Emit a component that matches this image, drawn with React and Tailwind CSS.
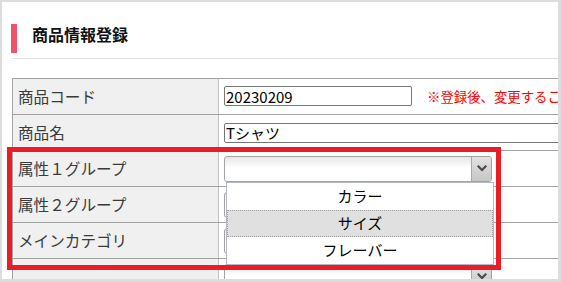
const rows = [
  { label: "商品コード", kind: "code" },
  { label: "商品名", kind: "name" },
  { label: "属性１グループ", kind: "open" },
  { label: "属性２グループ", kind: "select" },
  { label: "メインカテゴリ", kind: "select" },
  { label: "", kind: "select" },
];

const options = ["カラー", "サイズ", "フレーバー"];

function Chevron() {
  return (
    <svg width="10" height="7" viewBox="0 0 10 7" fill="none">
      <path d="M1.5 1.5 L5 5 L8.5 1.5" stroke="#4a4a4a" strokeWidth="2.2" strokeLinecap="square" />
    </svg>
  );
}

function SelectBox({ children }) {
  return (
    <div className="relative w-[268px] h-[26px] flex rounded-[3px] border border-[#a4a4a4] bg-gradient-to-b from-[#e6e6e6] to-white to-45%">
      <div className="flex-1" />
      <div className="w-[20px] h-full flex items-center justify-center border-l border-[#a8a8a8] rounded-r-[2px] bg-gradient-to-b from-[#e2e2e2] to-[#c6c6c6]">
        <Chevron />
      </div>
      {children}
    </div>
  );
}

function DropList() {
  return (
    <div className="absolute left-[1px] top-[25px] w-[268px] z-10 border border-[#b4b7c6] bg-white font-['Noto_Sans_CJK_JP',sans-serif] text-[15px] text-black">
      {options.map((opt, i) => (
        <div
          key={opt}
          className={
            i === 1
              ? "h-[27px] flex items-center justify-center bg-[#e0e0e0] border border-dotted border-[#a0a0a0]"
              : "h-[27px] flex items-center justify-center border border-transparent"
          }
        >
          {opt}
        </div>
      ))}
    </div>
  );
}

function ValueCell({ kind }) {
  if (kind === "code") {
    return (
      <div className="flex items-center">
        <div className="w-[188px] h-[20px] flex items-center px-[1px] border border-[#767676] rounded-[2px] text-[15px] leading-none text-black">
          20230209
        </div>
        <span className="ml-[15px] text-[13.4px] text-[#ff0000] whitespace-nowrap">
          ※登録後、変更することはできません
        </span>
      </div>
    );
  }
  if (kind === "name") {
    return (
      <div className="w-[400px] h-[20px] flex items-center px-[1px] border border-[#767676] rounded-[2px] text-[15px] leading-none text-black">
        Tシャツ
      </div>
    );
  }
  if (kind === "open") {
    return (
      <SelectBox>
        <DropList />
      </SelectBox>
    );
  }
  return <SelectBox />;
}

export default function App() {
  return (
    <div className="relative w-[561px] h-[282px] overflow-hidden bg-white border-l-2 border-t-2 border-r-[3px] border-b-[3px] border-[#dddddd] font-['Noto_Sans_CJK_JP',sans-serif]">
      {/* heading */}
      <div className="flex items-start pt-[22px] pl-[9px]">
        <div className="w-[6px] h-[29px] bg-[#f2536b]" />
        <h1 className="ml-[15px] mt-[2px] text-[16px] leading-[16px] font-bold text-[#111]">
          商品情報登録
        </h1>
      </div>
      <div className="ml-[10px] mt-[5px] border-t border-[#e2e2e2]" />

      {/* form table */}
      <div className="ml-[10px] mt-[19px] w-[560px] border-t border-l border-[#a3a3a3]">
        {rows.map((row, i) => (
          <div key={i} className="flex h-[36px] border-b border-[#a3a3a3]">
            <div className="w-[206px] shrink-0 flex items-center pl-[5px] bg-[#f0f0f0] border-r border-[#c4c4c4] text-[15.6px] text-[#3a3a3a]">
              {row.label}
            </div>
            <div className="flex-1 flex items-center pl-[5px]">
              <ValueCell kind={row.kind} />
            </div>
          </div>
        ))}
      </div>

      {/* highlight frame */}
      <div className="absolute left-[5px] top-[145px] w-[494px] h-[123px] border-[5px] border-[#ec1c26] z-20" />
    </div>
  );
}
